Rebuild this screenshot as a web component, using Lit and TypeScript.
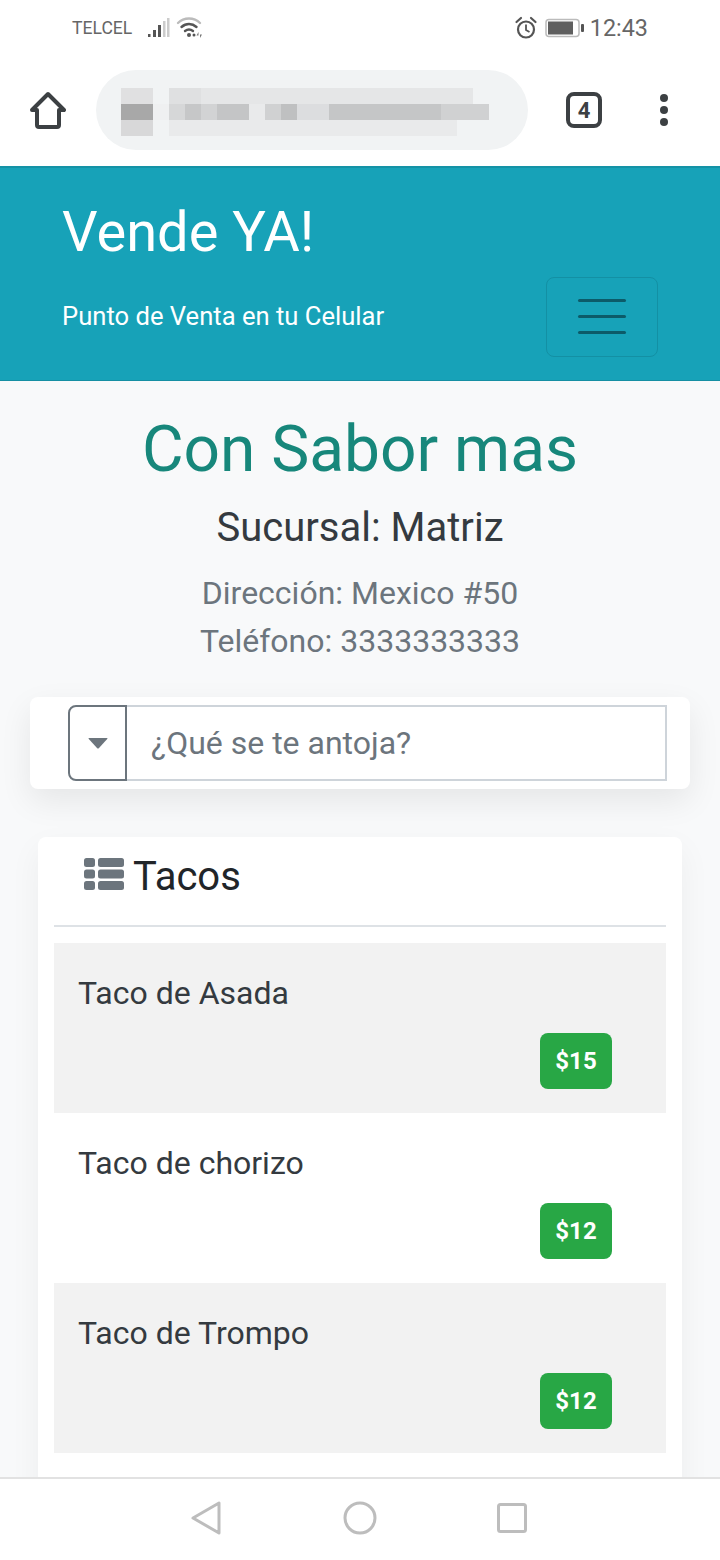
import { LitElement, html, css, svg } from 'lit';
import { customElement } from 'lit/decorators.js';

const ROBOTO = css`Roboto, "Liberation Sans", sans-serif`;

// pixelated url: [x, y, width, colour]
const URL_BLOCKS: [number, number, number, string][] = [
  [0, 0, 32, '#e0e0e1'], [48, 0, 32, '#dfe0e1'], [80, 0, 272, '#e5e6e7'],
  [0, 16, 32, '#a8a8a8'], [32, 16, 16, '#eff0f1'], [48, 16, 16, '#d6d7d8'], [64, 16, 16, '#c6c7c8'],
  [80, 16, 16, '#d2d3d4'], [96, 16, 32, '#c4c5c6'], [128, 16, 16, '#e9eaeb'], [144, 16, 16, '#d0d1d2'],
  [160, 16, 16, '#bfc0c1'], [176, 16, 32, '#dcdddf'], [208, 16, 112, '#c5c6c7'], [320, 16, 48, '#d0d1d2'],
  [0, 32, 32, '#d8d8d9'], [48, 32, 288, '#e9eaeb'],
];

const ITEMS = [
  { name: 'Taco de Asada', price: '$15' },
  { name: 'Taco de chorizo', price: '$12' },
  { name: 'Taco de Trompo', price: '$12' },
];

@customElement('app-root')
export class AppRoot extends LitElement {
  static styles = css`
    :host {
      display: block;
      position: relative;
      height: 1560px;
      overflow: hidden;
      background: #f8f9fa;
      font-family: ${ROBOTO};
    }
    .status {
      height: 56px;
      display: flex;
      align-items: center;
      padding: 0 72px;
      background: #fff;
      color: #666;
    }
    .status .carrier { font-size: 17.6px; margin-right: 15px; }
    .status .time { font-size: 23.4px; margin-left: 5px; }
    .status .spacer { flex: 1; }
    .status svg { display: block; }
    .status .wifi { margin-left: 5px; }
    .status .alarm { margin-right: 7px; }
    .browser {
      height: 110px;
      box-sizing: border-box;
      display: flex;
      align-items: center;
      background: #fff;
      padding: 0 0 2px 30px;
    }
    .pill {
      width: 432px;
      height: 80px;
      margin: 0 38px 0 30px;
      border-radius: 40px;
      background: #f1f3f4;
      display: flex;
      align-items: center;
      padding: 4px 0 0 25px;
      box-sizing: border-box;
    }
    .dots { margin-left: 57px; }
    header {
      height: 215px;
      box-sizing: border-box;
      background: #17a2b8;
      border-top: 2px solid #1492a6;
      border-bottom: 1px solid #158fa3;
      padding: 0 62px;
      display: flex;
      justify-content: space-between;
      color: #fff;
    }
    .brand h1 {
      margin: 31px 0 0;
      font-size: 56px;
      line-height: 66px;
      font-weight: 400;
    }
    .brand p {
      margin: 35px 0 0;
      font-size: 25.6px;
      line-height: 32px;
    }
    .toggle {
      align-self: flex-end;
      margin-bottom: 23px;
      width: 112px;
      height: 80px;
      box-sizing: border-box;
      border: 1px solid #1390a4;
      border-radius: 8px;
      padding-bottom: 2px;
      display: flex;
      flex-direction: column;
      align-items: center;
      justify-content: center;
      gap: 13px;
    }
    .toggle span {
      width: 48px;
      height: 3px;
      border-radius: 2px;
      background: #0c5b69;
    }
    .shop { text-align: center; padding-top: 30px; }
    .shop h2 {
      margin: 0;
      font-size: 64px;
      line-height: 78px;
      font-weight: 400;
      color: #17877b;
    }
    .shop h3 {
      margin: 16px 0 0;
      font-size: 40px;
      line-height: 46px;
      font-weight: 400;
      color: #343a40;
    }
    .shop p {
      margin: 0;
      font-size: 32px;
      line-height: 48px;
      color: #6c757d;
    }
    .shop .addr { margin-top: 18px; }
    .search {
      margin: 32px 30px 0;
      height: 92px;
      box-sizing: border-box;
      padding: 8px 23px 8px 38px;
      background: #fff;
      border-radius: 8px;
      box-shadow: 0 12px 32px rgba(0, 0, 0, 0.08);
      display: flex;
    }
    .caret {
      width: 59px;
      box-sizing: border-box;
      border: 2px solid #6c757d;
      border-radius: 8px 0 0 8px;
      display: flex;
      align-items: center;
      justify-content: center;
    }
    .query {
      flex: 1;
      box-sizing: border-box;
      border: 2px solid #ced4da;
      border-left: none;
      padding-left: 24px;
      display: flex;
      align-items: center;
      font-size: 32px;
      color: #6c757d;
    }
    .card {
      margin: 48px 38px 0;
      padding: 0 16px 200px;
      background: #fff;
      border-radius: 8px;
      box-shadow: 0 12px 32px rgba(0, 0, 0, 0.05);
    }
    .card-head {
      height: 90px;
      box-sizing: border-box;
      padding: 0 0 10px 30px;
      display: flex;
      align-items: center;
      gap: 9px;
      border-bottom: 2px solid #dee2e6;
      font-size: 40px;
      color: #212529;
    }
    .card-head svg { margin-top: -4px; }
    .list { margin-top: 16px; }
    .row {
      height: 170px;
      box-sizing: border-box;
      padding: 32px 54px 0 24px;
      display: flex;
      flex-direction: column;
      font-size: 32px;
      line-height: 36px;
      color: #343a40;
    }
    .row:nth-child(odd) { background: #f2f2f2; }
    .badge {
      align-self: flex-end;
      margin-top: 22px;
      width: 72px;
      height: 56px;
      border-radius: 8px;
      background: #28a745;
      color: #fff;
      font-size: 24px;
      font-weight: 700;
      display: flex;
      align-items: center;
      justify-content: center;
    }
    nav {
      position: absolute;
      left: 0;
      right: 0;
      bottom: 0;
      height: 83px;
      box-sizing: border-box;
      background: #fff;
      border-top: 2px solid #e2e2e2;
      display: flex;
      align-items: center;
      padding-bottom: 4px;
    }
    .nav-back { margin-left: 190px; }
    .nav-home { margin-left: 121px; }
    .nav-recent { margin-left: 120px; }
  `;

  render() {
    return html`
      <div class="status">
        <span class="carrier">TELCEL</span>
        <svg width="24" height="22" viewBox="0 0 24 22">
          <g fill="#555">
            <rect x="1" y="17" width="2.5" height="3"></rect>
            <rect x="6" y="13" width="3" height="7"></rect>
            <rect x="11" y="8" width="3" height="12"></rect>
          </g>
          <g fill="#ccc">
            <rect x="16" y="4" width="2.5" height="16"></rect>
            <rect x="20" y="1" width="2.5" height="19"></rect>
          </g>
        </svg>
        <svg class="wifi" width="28" height="22" viewBox="0 0 28 22">
          <g fill="none" stroke-width="2.4" stroke-linecap="round">
            <path d="M2 6 C8 0 18 0 24 6" stroke="#bbb"></path>
            <path d="M5.5 10 C10 6 16 6 20.5 10" stroke="#555"></path>
            <path d="M9 14 C11.5 12 14.5 12 17 14" stroke="#555"></path>
          </g>
          <circle cx="13" cy="18" r="2" fill="#555"></circle>
          <circle cx="18" cy="18" r="1.5" fill="#555"></circle>
          <path d="M22.5 15 l-2 3.5 h2z M24 21 l2 -3.5 h-2z" fill="#777"></path>
        </svg>
        <span class="spacer"></span>
        <svg class="alarm" width="24" height="24" viewBox="0 0 24 24">
          <circle cx="12" cy="13.5" r="8" fill="none" stroke="#555" stroke-width="2.2"></circle>
          <path d="M12 8.5 V14 L15.5 16" fill="none" stroke="#555" stroke-width="1.8"></path>
          <path d="M2.5 6 L7 2 M21.5 6 L17 2" stroke="#555" stroke-width="2.2" stroke-linecap="round"></path>
        </svg>
        <svg width="40" height="20" viewBox="0 0 40 20">
          <rect x="1" y="1.5" width="33" height="17" rx="3" fill="#fff" stroke="#bbb" stroke-width="1.5"></rect>
          <rect x="3" y="3.5" width="25" height="13" fill="#5f5f5f"></rect>
          <rect x="36" y="6" width="3" height="8" rx="1" fill="#555"></rect>
        </svg>
        <span class="time">12:43</span>
      </div>

      <div class="browser">
        <svg width="36" height="38" viewBox="0 0 36 38">
          <path d="M2 19 L18 3 L34 19 H29 V34 Q29 36 27 36 H9 Q7 36 7 34 V19 Z"
            fill="none" stroke="#3c4043" stroke-width="4" stroke-linejoin="round"></path>
        </svg>
        <div class="pill">
          <svg width="368" height="48" viewBox="0 0 368 48">
            ${URL_BLOCKS.map(([x, y, w, c]) => svg`<rect x=${x} y=${y} width=${w} height="16" fill=${c}></rect>`)}
          </svg>
        </div>
        <svg width="36" height="36" viewBox="0 0 36 36">
          <rect x="2" y="2" width="32" height="32" rx="6" fill="none" stroke="#3c4043" stroke-width="4"></rect>
          <text x="18" y="26" text-anchor="middle" font-family="Roboto" font-size="22" font-weight="700" fill="#3c4043">4</text>
        </svg>
        <svg class="dots" width="10" height="34" viewBox="0 0 10 34">
          <circle cx="5" cy="5" r="4" fill="#3c4043"></circle>
          <circle cx="5" cy="17" r="4" fill="#3c4043"></circle>
          <circle cx="5" cy="29" r="4" fill="#3c4043"></circle>
        </svg>
      </div>

      <header>
        <div class="brand">
          <h1>Vende YA!</h1>
          <p>Punto de Venta en tu Celular</p>
        </div>
        <div class="toggle"><span></span><span></span><span></span></div>
      </header>

      <section class="shop">
        <h2>Con Sabor mas</h2>
        <h3>Sucursal: Matriz</h3>
        <p class="addr">Dirección: Mexico #50</p>
        <p>Teléfono: 3333333333</p>
      </section>

      <div class="search">
        <div class="caret">
          <svg width="20" height="11" viewBox="0 0 20 11"><path d="M1 0 H19 Q20 0 19.2 1 L11 10 Q10 11 9 10 L0.8 1 Q0 0 1 0Z" fill="#6c757d"></path></svg>
        </div>
        <div class="query">¿Qué se te antoja?</div>
      </div>

      <div class="card">
        <div class="card-head">
          <svg width="40" height="32" viewBox="0 0 40 32">
            <g fill="#6c757d">
              <rect x="0" y="0" width="11" height="9" rx="2.5"></rect>
              <rect x="0" y="11.5" width="11" height="9" rx="2.5"></rect>
              <rect x="0" y="23" width="11" height="9" rx="2.5"></rect>
              <rect x="14" y="0" width="26" height="9" rx="2.5"></rect>
              <rect x="14" y="11.5" width="26" height="9" rx="2.5"></rect>
              <rect x="14" y="23" width="26" height="9" rx="2.5"></rect>
            </g>
          </svg>
          <span>Tacos</span>
        </div>
        <div class="list">
          ${ITEMS.map(i => html`
            <div class="row">
              <span>${i.name}</span>
              <span class="badge">${i.price}</span>
            </div>
          `)}
        </div>
      </div>

      <nav>
        <svg class="nav-back" width="32" height="34" viewBox="0 0 32 34">
          <path d="M29 2 V32 L3 17 Z" fill="none" stroke="#bdbdbd" stroke-width="3" stroke-linejoin="round"></path>
        </svg>
        <svg class="nav-home" width="34" height="34" viewBox="0 0 34 34">
          <circle cx="17" cy="17" r="15" fill="none" stroke="#bdbdbd" stroke-width="3"></circle>
        </svg>
        <svg class="nav-recent" width="30" height="30" viewBox="0 0 30 30">
          <rect x="1.5" y="1.5" width="27" height="27" rx="2" fill="none" stroke="#bdbdbd" stroke-width="3"></rect>
        </svg>
      </nav>
    `;
  }
}
